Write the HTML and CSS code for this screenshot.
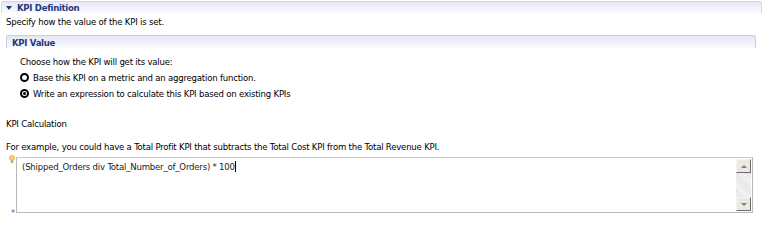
FILE: index.html
```html
<!DOCTYPE html>
<html>
<head>
<meta charset="utf-8">
<link rel="stylesheet" href="styles.css">
</head>
<body>
<div class="page">
  <div class="section-head">
    <span class="twisty"></span><span class="section-title">KPI Definition</span>
  </div>
  <div class="desc">Specify how the value of the KPI is set.</div>
  <div class="sub-head"><span class="sub-title">KPI Value</span></div>
  <div class="sub-body">
    <div class="choose">Choose how the KPI will get its value:</div>
    <div class="radio-row"><span class="radio"></span><span>Base this KPI on a metric and an aggregation function.</span></div>
    <div class="radio-row"><span class="radio checked"></span><span>Write an expression to calculate this KPI based on existing KPIs</span></div>
  </div>
  <div class="calc-label">KPI Calculation</div>
  <div class="example">For example, you could have a Total Profit KPI that subtracts the Total Cost KPI from the Total Revenue KPI.</div>
  <div class="editor-row">
    <div class="gutter">
      <svg class="bulb" width="6" height="9" viewBox="0 0 6 9">
        <circle cx="3" cy="3" r="2.5" fill="#fbd27a" stroke="#e0a040" stroke-width="0.8"/>
        <rect x="1.8" y="5.5" width="2.4" height="2.5" fill="#b0a890"/>
      </svg>
      <span class="req">*</span>
    </div>
    <div class="editor">
      <div class="editor-text">(Shipped_Orders div Total_Number_of_Orders) * 100<span class="caret"></span></div>
      <div class="scrollbar">
        <div class="sb-btn"><span class="arrow-up"></span></div>
        <div class="sb-track"></div>
        <div class="sb-btn"><span class="arrow-down"></span></div>
      </div>
    </div>
  </div>
</div>
</body>
</html>
```
FILE: styles.css
```css
html, body {
  margin: 0;
  padding: 0;
  background: #ffffff;
}
.page {
  width: 769px;
  height: 220px;
  overflow: hidden;
  font-family: "DejaVu Sans Condensed", "Liberation Sans", sans-serif;
  font-size: 9.5px;
  color: #000;
  letter-spacing: -0.2px;
}
.section-head {
  margin: 1px 7px 0 1px;
  height: 11px;
  border: 1px solid #d4d4e6;
  border-bottom: none;
  border-radius: 2px 3px 0 0;
  background: linear-gradient(#e8e8f6, #fbfbff);
  display: flex;
  align-items: center;
  padding-left: 4px;
}
.twisty {
  width: 0;
  height: 0;
  border-left: 3px solid transparent;
  border-right: 3px solid transparent;
  border-top: 4px solid #1f3a78;
  margin-right: 5px;
}
.section-title, .sub-title {
  font-weight: bold;
  color: #1f3a78;
  font-size: 9.5px;
  letter-spacing: -0.3px;
}
.desc {
  margin: 3px 0 0 6px;
  line-height: 12px;
}
.sub-head {
  margin: 7px 13px 0 6px;
  height: 12px;
  border: 1px solid #ccccde;
  border-bottom: none;
  border-radius: 2px 3px 0 0;
  background: linear-gradient(#e6e6f5, #fafaff);
  display: flex;
  align-items: center;
  padding-left: 5px;
}
.sub-body {
  padding: 7px 0 0 20px;
}
.choose {
  line-height: 13px;
}
.radio-row {
  display: flex;
  align-items: center;
  height: 16px;
  position: relative;
  top: 1px;
}
.radio {
  width: 5px;
  height: 5px;
  border: 2px solid #000;
  border-radius: 50%;
  margin-right: 4px;
  position: relative;
  flex: none;
}
.radio.checked::after {
  content: "";
  position: absolute;
  left: 1px;
  top: 1px;
  width: 3px;
  height: 3px;
  border-radius: 50%;
  background: #000;
}
.calc-label {
  margin: 18px 0 0 6px;
  line-height: 12px;
}
.example {
  margin: 10px 0 0 6px;
  line-height: 12px;
  position: relative;
  top: 1px;
}
.editor-row {
  display: flex;
  margin-top: 5px;
  margin-left: 8px;
}
.gutter {
  width: 8px;
  height: 56px;
  display: flex;
  flex-direction: column;
  justify-content: space-between;
}
.bulb {
  display: block;
  margin-left: 1px;
  margin-top: -2px;
}
.req {
  color: #4060c0;
  font-size: 9px;
  line-height: 8px;
  margin-left: 3px;
  margin-bottom: -4px;
}
.editor {
  width: 735px;
  height: 54px;
  border: 1px solid #b8b8b8;
  border-top-color: #c8c8c8;
  display: flex;
  background: #fff;
}
.editor-text {
  flex: 1;
  padding: 3px 0 0 5px;
  line-height: 12px;
  color: #222;
}
.caret {
  display: inline-block;
  width: 1px;
  height: 11px;
  background: #000;
  vertical-align: -2px;
}
.scrollbar {
  width: 15px;
  margin: 1px 1px 1px 0;
  display: flex;
  flex-direction: column;
}
.sb-btn {
  height: 14px;
  box-sizing: border-box;
  background: #ece9e0;
  border: 1px solid;
  border-color: #f4f4f0 #6a6a6a #6a6a6a #f4f4f0;
  display: flex;
  align-items: center;
  justify-content: center;
}
.sb-track {
  flex: 1;
  background-color: #eeeeee;
  background-image: repeating-linear-gradient(45deg, #e4e4e4 0 1px, #f6f6f6 1px 2px);
}
.arrow-up {
  width: 0; height: 0;
  border-left: 3px solid transparent;
  border-right: 3px solid transparent;
  border-bottom: 3px solid #808080;
}
.arrow-down {
  width: 0; height: 0;
  border-left: 3px solid transparent;
  border-right: 3px solid transparent;
  border-top: 3px solid #808080;
}
```
